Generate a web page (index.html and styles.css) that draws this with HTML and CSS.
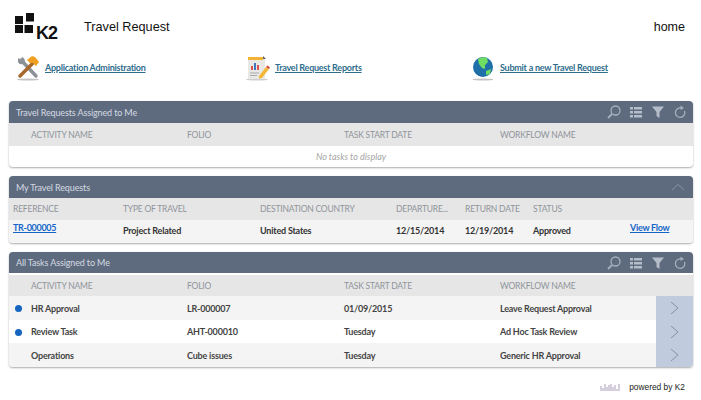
FILE: index.html
```html
<!DOCTYPE html>
<html lang="en">
<head>
	<meta charset="utf-8">
	<title>Travel Request</title>
	<link rel="stylesheet" href="styles.css">
</head>
<body>
	<div class="top">
		<div class="logo">
			<svg class="logo-mark" width="22" height="22" viewBox="0 0 22 22">
				<rect x="1" y="4" width="8" height="8" fill="#111"/>
				<rect x="12" y="1" width="8" height="8.500" fill="#111"/>
				<rect x="1" y="13" width="8" height="8" fill="#111"/>
				<rect x="10.500" y="13" width="8.500" height="8" fill="#111"/>
			</svg>
			<span class="logo-text">K2</span>
		</div>
		<div class="app-title">Travel Request</div>
		<div class="home">home</div>
	</div>

	<div class="links">
		<div class="link-item">
			<svg width="24" height="26" viewBox="0 0 24 26">
				<ellipse cx="12" cy="24.500" rx="11" ry="1" fill="#c4c4c4"/>
				<path d="M5 5 L20 21" stroke="#8d9299" stroke-width="3.500" stroke-linecap="round"/>
				<path d="M2 3 L2 7 Q3 10 7 9 L9 7 Q9 3 6 2 L5 5 Z" fill="#8d9299"/>
				<path d="M17 8 L4 21" stroke="#a8682c" stroke-width="3.500" stroke-linecap="round"/>
				<path d="M11 5 L16 1 L19 2 L23 7 L20 11 L17 8 L14 8 Z" fill="#f0a020"/>
			</svg>
			<a href="#">Application Administration</a>
		</div>
		<div class="link-item">
			<svg width="24" height="26" viewBox="0 0 24 26">
				<ellipse cx="11" cy="24.500" rx="11" ry="1" fill="#cfcfcf"/>
				<rect x="2" y="2" width="17" height="22" fill="#e8e8e4"/>
				<rect x="2" y="2" width="15" height="3" fill="#f2b233"/>
				<path d="M17 1 L20 4 L17 4 Z" fill="#666"/>
				<rect x="5" y="11" width="2" height="4" fill="#d9534f"/>
				<rect x="8" y="8" width="2" height="7" fill="#3f78c0"/>
				<rect x="11" y="10" width="2" height="5" fill="#d9534f"/>
				<path d="M4 18 H13 M4 20.500 H11" stroke="#a9adb2" stroke-width="1"/>
				<path d="M13 21 L20 12 L23 14 L16 23 L13 23.500 Z" fill="#f3b73a"/>
				<path d="M20 12 L21.500 10.500 L24 12.500 L23 14 Z" fill="#d8433c"/>
			</svg>
			<a href="#">Travel Request Reports</a>
		</div>
		<div class="link-item link-submit">
			<svg width="22" height="26" viewBox="0 0 22 26">
				<ellipse cx="11" cy="24.500" rx="10.500" ry="1" fill="#c4c4c4"/>
				<circle cx="11" cy="12" r="10" fill="#1f6fa8"/>
				<path d="M6 4 Q11 1 15 3 L16 7 L13 10 L13 14 L10 13 L7 9 Z" fill="#6fdc62"/>
				<path d="M14 16 L19 14 L18 19 L14 20 Z" fill="#6fdc62"/>
				<path d="M2 15 Q6 22 12 22 Q6 21 2 15" fill="#124d80"/>
			</svg>
			<a href="#">Submit a new Travel Request</a>
		</div>
	</div>

	<div class="panel">
		<div class="panel-head">
			<span>Travel Requests Assigned to Me</span>
			<div class="tools">
				<svg width="14" height="14" viewBox="0 0 14 14"><use href="#ico-search"/></svg>
				<svg width="14" height="14" viewBox="0 0 14 14"><use href="#ico-list"/></svg>
				<svg width="14" height="14" viewBox="0 0 14 14"><use href="#ico-filter"/></svg>
				<svg width="14" height="14" viewBox="0 0 14 14"><use href="#ico-refresh"/></svg>
			</div>
		</div>
		<div class="cols task-grid">
			<div>ACTIVITY NAME</div>
			<div>FOLIO</div>
			<div>TASK START DATE</div>
			<div>WORKFLOW NAME</div>
		</div>
		<div class="empty">No tasks to display</div>
	</div>

	<div class="panel">
		<div class="panel-head">
			<span>My Travel Requests</span>
			<svg class="collapse" width="14" height="8" viewBox="0 0 14 8"><path d="M1 7 L7 1.500 L13 7" fill="none" stroke="#8793a5" stroke-width="1"/></svg>
		</div>
		<div class="cols cols-short req-grid">
			<div>REFERENCE</div>
			<div>TYPE OF TRAVEL</div>
			<div>DESTINATION COUNTRY</div>
			<div>DEPARTURE...</div>
			<div>RETURN DATE</div>
			<div>STATUS</div>
		</div>
		<div class="req-row req-grid">
			<a class="row-link" href="#">TR-000005</a>
			<div>Project Related</div>
			<div>United States</div>
			<div>12/15/2014</div>
			<div>12/19/2014</div>
			<div>Approved</div>
			<a class="row-link" href="#">View Flow</a>
		</div>
	</div>

	<div class="panel">
		<div class="panel-head panel-head-gap">
			<span>All Tasks Assigned to Me</span>
			<div class="tools">
				<svg width="14" height="14" viewBox="0 0 14 14"><use href="#ico-search"/></svg>
				<svg width="14" height="14" viewBox="0 0 14 14"><use href="#ico-list"/></svg>
				<svg width="14" height="14" viewBox="0 0 14 14"><use href="#ico-filter"/></svg>
				<svg width="14" height="14" viewBox="0 0 14 14"><use href="#ico-refresh"/></svg>
			</div>
		</div>
		<div class="cols cols-tight task-grid">
			<div>ACTIVITY NAME</div>
			<div>FOLIO</div>
			<div>TASK START DATE</div>
			<div>WORKFLOW NAME</div>
		</div>
		<div class="task-row task-grid">
			<div class="unread">HR Approval</div>
			<div>LR-000007</div>
			<div>01/09/2015</div>
			<div>Leave Request Approval</div>
			<div class="go"><svg width="9" height="14" viewBox="0 0 9 14"><path d="M1 1 L8 7 L1 13" fill="none" stroke="#8793a5" stroke-width="1"/></svg></div>
		</div>
		<div class="task-row task-grid alt">
			<div class="unread">Review Task</div>
			<div>AHT-000010</div>
			<div>Tuesday</div>
			<div>Ad Hoc Task Review</div>
			<div class="go"><svg width="9" height="14" viewBox="0 0 9 14"><path d="M1 1 L8 7 L1 13" fill="none" stroke="#8793a5" stroke-width="1"/></svg></div>
		</div>
		<div class="task-row task-grid">
			<div>Operations</div>
			<div>Cube issues</div>
			<div>Tuesday</div>
			<div>Generic HR Approval</div>
			<div class="go"><svg width="9" height="14" viewBox="0 0 9 14"><path d="M1 1 L8 7 L1 13" fill="none" stroke="#8793a5" stroke-width="1"/></svg></div>
		</div>
	</div>

	<div class="powered">
		<svg width="21" height="8" viewBox="0 0 21 8">
			<path d="M1 3 V8 M3 5 V8 M5 1 V8 M7 4 V8 M9 2 V8 M11 1 V8 M13 4 V8 M15 2 V8 M17 6 V8 M19 1 V8" stroke="#b9adc6" stroke-width="1.200"/>
		</svg>
		<span>powered by K2</span>
	</div>

	<svg class="sprites" width="0" height="0">
		<defs>
			<g id="ico-search" fill="none" stroke="#a5afbd">
				<circle cx="8.500" cy="5.500" r="4.500" stroke-width="1.300"/>
				<path d="M5 9 L1 13" stroke-width="1.800"/>
			</g>
			<g id="ico-list" fill="#b4bdc9">
				<rect x="1" y="2" width="3" height="2.500"/>
				<rect x="5" y="2" width="8" height="2.500"/>
				<rect x="1" y="6" width="3" height="2.500"/>
				<rect x="5" y="6" width="8" height="2.500"/>
				<rect x="1" y="10" width="3" height="2.500"/>
				<rect x="5" y="10" width="8" height="2.500"/>
			</g>
			<g id="ico-filter" fill="#b4bdc9">
				<path d="M1 1.500 H13 L8.500 7 V13 L5.500 11 V7 Z"/>
			</g>
			<g id="ico-refresh" fill="none" stroke="#a5afbd" stroke-width="1.300">
				<path d="M8.500 3.200 A4.700 4.700 0 1 0 11.500 6"/>
				<path d="M7.500 0.500 L7.500 5 L11 3 Z" fill="#a5afbd" stroke="none"/>
			</g>
		</defs>
	</svg>
</body>
</html>
```

FILE: styles.css
```css
body {
	margin: 0;
	background: #fff;
	font-family: Lato, "Open Sans", sans-serif;
	font-size: 9px;
	color: #333;
}
a {
	color: #2f6d8d;
}
.top {
	display: flex;
	align-items: flex-start;
	height: 55px;
	padding: 13px 16px 0 14px;
	box-sizing: border-box;
	font-family: "Liberation Sans", Arial, sans-serif;
	color: #111;
}
.logo {
	display: flex;
	align-items: flex-end;
	width: 70px;
	height: 28px;
}
.logo-mark {
	margin-bottom: 7px;
}
.logo-text {
	font-size: 18px;
	font-weight: bold;
	line-height: 16px;
	letter-spacing: -1px;
}
.app-title {
	flex: 1;
	font-size: 12.700px;
	line-height: 16px;
	margin-top: 6px;
}
.home {
	font-size: 12.500px;
	line-height: 16px;
	margin-top: 6px;
}
.links {
	display: grid;
	grid-template-columns: 230px 226px 1fr;
	height: 46px;
	padding-left: 16px;
}
.link-item {
	display: flex;
	align-items: flex-start;
	gap: 5px;
}
.link-submit {
	gap: 6px;
}
.link-item a {
	line-height: 12px;
	margin-top: 7px;
	font-weight: bold;
	letter-spacing: -0.250px;
}
.panel {
	margin: 0 8px 9px 9px;
	background: #fff;
	border-radius: 4px;
	box-shadow: 0 1px 2px #aaa;
	overflow: hidden;
}
.panel-head {
	display: flex;
	align-items: center;
	justify-content: space-between;
	box-sizing: border-box;
	height: 22px;
	padding: 0 7px;
	background: #5e6b7f;
	color: #d5dae1;
	letter-spacing: -0.130px;
}
.panel-head-gap {
	height: 23px;
	border-bottom: 2px solid #fff;
}
.tools {
	display: flex;
	gap: 8px;
	margin-right: -1px;
}
.collapse {
	margin-right: 1px;
}
.cols {
	height: 23px;
	align-items: center;
	background: #e6e6e6;
	color: #8f949b;
	font-size: 8.500px;
	letter-spacing: -0.200px;
}
.cols-short {
	height: 22px;
}
.cols-tight {
	height: 21px;
}
.task-grid {
	display: grid;
	grid-template-columns: 178px 157px 156px 156px 1fr;
}
.task-grid > div:first-child {
	padding-left: 22px;
}
.req-grid {
	display: grid;
	grid-template-columns: 110px 137px 136px 69px 68px 97px 1fr;
	padding-left: 4px;
}
.empty {
	height: 21px;
	line-height: 21px;
	text-align: center;
	font-style: italic;
	color: #a5a5a5;
}
.req-row {
	height: 23px;
	padding-bottom: 2px;
	box-sizing: border-box;
	align-items: center;
	background: #f4f4f4;
	color: #333;
	font-weight: bold;
	letter-spacing: -0.200px;
}
.row-link {
	color: #1565c8;
	align-self: start;
	margin-top: 2px;
	letter-spacing: -0.300px;
}
.task-row {
	height: 24px;
	align-items: center;
	background: #f4f4f4;
	font-weight: bold;
	color: #444;
	letter-spacing: -0.200px;
}
.task-row.alt {
	height: 23px;
	background: #fff;
}
.task-grid > .unread {
	position: relative;
}
.unread::before {
	content: "";
	position: absolute;
	left: 6px;
	top: 50%;
	width: 7px;
	height: 7px;
	margin-top: -3px;
	border-radius: 50%;
	background: #1565c0;
}
.go {
	display: flex;
	align-items: center;
	justify-content: center;
	align-self: stretch;
	background: #c0cbde;
}
.powered {
	display: flex;
	justify-content: flex-end;
	align-items: center;
	gap: 8px;
	margin-top: 15px;
	padding-right: 16px;
	font-family: "Liberation Sans", Arial, sans-serif;
	font-size: 8.400px;
	color: #222;
}
.sprites {
	position: absolute;
}
```
